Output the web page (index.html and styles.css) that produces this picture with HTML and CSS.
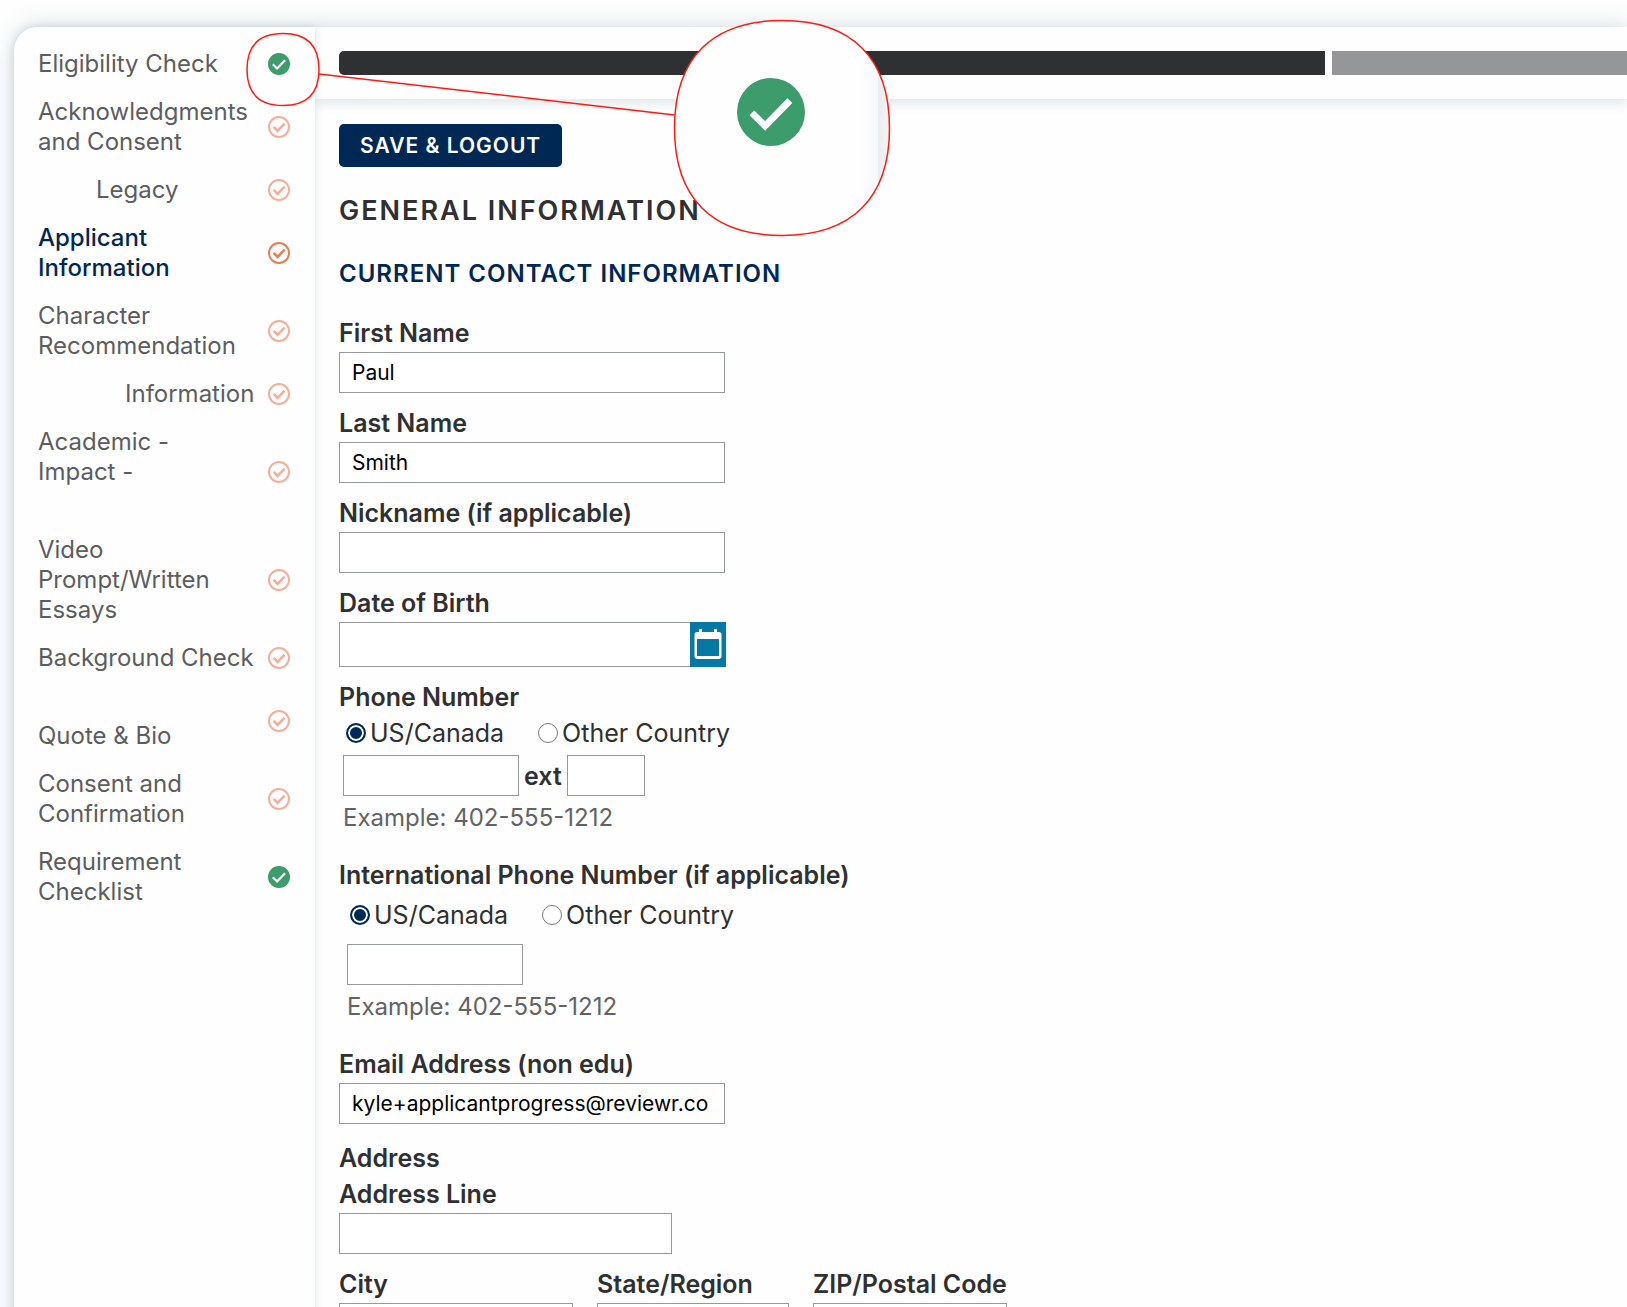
FILE: index.html
```html
<!DOCTYPE html>
<html lang="en">
  <head>
    <title>Applicant Information</title>
    <meta charset="UTF-8" />
    <meta name="viewport" content="width=device-width, initial-scale=1" />
    <link rel="stylesheet" href="styles.css">
  </head>
  <body>
    <!-- shared status icons -->
    <svg class="sprite" aria-hidden="true">
      <symbol id="done" viewBox="0 0 22 22">
        <circle cx="11" cy="11" r="11" fill="#3c9c6b" />
        <path d="M4.800 11.300l4.300 4.200 8-8.200" fill="none" stroke="#fff" stroke-width="2.200" />
      </symbol>
      <symbol id="todo" viewBox="0 0 22 22">
        <circle cx="11" cy="11" r="10" fill="none" stroke="currentColor" stroke-width="2" />
        <path d="M5.600 10.800l4 4 7-7.200" fill="none" stroke="currentColor" stroke-width="2.600" />
      </symbol>
    </svg>

    <div class="card">
      <nav class="sidebar">
        <ul>
          <li><a href="#">Eligibility Check</a><svg class="icon"><use href="#done" /></svg></li>
          <li><a href="#">Acknowledgments<br>and Consent</a><svg class="icon"><use href="#todo" /></svg></li>
          <li class="indent"><a href="#">Legacy</a><svg class="icon"><use href="#todo" /></svg></li>
          <li class="active"><a href="#">Applicant<br>Information</a><svg class="icon"><use href="#todo" /></svg></li>
          <li><a href="#">Character<br>Recommendation</a><svg class="icon"><use href="#todo" /></svg></li>
          <li class="indent-more"><a href="#">Information</a><svg class="icon"><use href="#todo" /></svg></li>
          <li><a href="#">Academic -<br>Impact -<br>&nbsp;</a><svg class="icon"><use href="#todo" /></svg></li>
          <li><a href="#">Video<br>Prompt/Written<br>Essays</a><svg class="icon"><use href="#todo" /></svg></li>
          <li><a href="#">Background Check</a><svg class="icon"><use href="#todo" /></svg></li>
          <li><a href="#">&nbsp;<br>Quote &amp; Bio</a><svg class="icon"><use href="#todo" /></svg></li>
          <li><a href="#">Consent and<br>Confirmation</a><svg class="icon"><use href="#todo" /></svg></li>
          <li><a href="#">Requirement<br>Checklist</a><svg class="icon"><use href="#done" /></svg></li>
        </ul>
      </nav>

      <div class="content">
        <header class="progress">
          <div class="bar bar-done"></div>
          <div class="bar bar-left"></div>
        </header>

        <main>
          <button class="button" type="button">SAVE &amp; LOGOUT</button>
          <h1>GENERAL INFORMATION</h1>
          <h2>CURRENT CONTACT INFORMATION</h2>

          <form>
            <div class="field">
              <label for="first">First Name</label>
              <input class="text" type="text" id="first" value="Paul">
            </div>
            <div class="field">
              <label for="last">Last Name</label>
              <input class="text" type="text" id="last" value="Smith">
            </div>
            <div class="field">
              <label for="nick">Nickname (if applicable)</label>
              <input class="text" type="text" id="nick">
            </div>
            <div class="field">
              <label for="dob">Date of Birth</label>
              <div class="date">
                <input class="text" type="text" id="dob">
                <button class="calendar" type="button" aria-label="Open calendar">
                  <svg viewBox="0 0 28 32" width="28" height="32">
                    <path fill="#fff" fill-rule="evenodd" d="M3 4h2V1h3v3h12V1h3v3h2a2.500 2.500 0 0 1 2.500 2.500V28a3 3 0 0 1-3 3h-21a3 3 0 0 1-3-3V6.500A2.500 2.500 0 0 1 3 4zM3 11v17h22V11z" />
                  </svg>
                </button>
              </div>
            </div>

            <fieldset class="phone">
              <legend>Phone Number</legend>
              <div class="radios">
                <label><input type="radio" name="phone" checked>US/Canada</label>
                <label><input type="radio" name="phone">Other Country</label>
              </div>
              <div class="numbers">
                <input class="text number" type="tel" aria-label="Phone number">
                <label for="ext">ext</label>
                <input class="text ext" type="text" id="ext">
              </div>
              <p class="hint">Example: 402-555-1212</p>
            </fieldset>

            <fieldset class="phone phone-intl">
              <legend>International Phone Number (if applicable)</legend>
              <div class="radios">
                <label><input type="radio" name="intl" checked>US/Canada</label>
                <label><input type="radio" name="intl">Other Country</label>
              </div>
              <div class="numbers">
                <input class="text number" type="tel" aria-label="International phone number">
              </div>
              <p class="hint">Example: 402-555-1212</p>
            </fieldset>

            <div class="field">
              <label for="email">Email Address (non edu)</label>
              <input class="text" type="text" id="email" value="kyle+applicantprogress@reviewr.co">
            </div>

            <fieldset class="address">
              <legend>Address</legend>
              <div class="field">
                <label for="line">Address Line</label>
                <input class="text line" type="text" id="line">
              </div>
              <div class="columns">
                <div class="field city">
                  <label for="city">City</label>
                  <input class="text" type="text" id="city">
                </div>
                <div class="field state">
                  <label for="state">State/Region</label>
                  <input class="text" type="text" id="state">
                </div>
                <div class="field zip">
                  <label for="zip">ZIP/Postal Code</label>
                  <input class="text" type="text" id="zip">
                </div>
              </div>
            </fieldset>
          </form>
        </main>
      </div>
    </div>

    <!-- magnified callout over the first status icon -->
    <svg class="callout" width="900" height="240" viewBox="0 0 900 240" aria-hidden="true">
      <defs>
        <linearGradient id="edge" gradientUnits="userSpaceOnUse" x1="860" y1="0" x2="890" y2="0">
          <stop offset="0" stop-color="#fefefe" />
          <stop offset="0.58" stop-color="#f6f8fa" />
          <stop offset="0.62" stop-color="#e9eef0" />
          <stop offset="1" stop-color="#f3f6f7" />
        </linearGradient>
      </defs>
      <g stroke="#ff1a12" stroke-width="1.500" fill="none">
        <path d="M283 33.500c24 0 36 12 36 36s-12 36-36 36-36-12-36-36 12-36 36-36z" />
        <path d="M319 74L674.500 115" />
        <path fill="url(#edge)" d="M782 20.500c70 0 107.500 37.500 107.500 107.500s-37.500 107.500-107.500 107.500S674.500 198 674.500 128 712 20.500 782 20.500z" />
      </g>
      <use href="#done" x="737" y="78" width="68" height="68" />
    </svg>
  </body>
</html>
```
FILE: styles.css
```css
* {
  box-sizing: border-box;
}
html {
  overflow: hidden;
}
body {
  margin: 0;
  padding: 27px 0 0 14px;
  background-color: #fefefe;
  color: #2f3032;
  font-family: Inter, sans-serif;
  font-size: 24px;
  line-height: 30px;
}
.sprite {
  display: none;
}
.card {
  display: flex;
  min-height: calc(100vh - 27px);
  background-color: #fefefe;
  border-radius: 24px 0 0 0;
  box-shadow: 0 0 24px rgba(60, 100, 115, 0.22);
}

/* Sidebar */
.sidebar {
  position: relative;
  z-index: 1;
  flex: 0 0 301px;
  padding: 22px 25px 24px 24px;
  background-color: #fefefe;
  border-radius: 24px 0 0 0;
  box-shadow: 0 0 8px rgba(60, 100, 130, 0.2);
}
.sidebar ul {
  display: flex;
  flex-direction: column;
  gap: 18px;
  margin: 0;
  padding: 0;
  list-style: none;
}
.sidebar li {
  display: flex;
  align-items: center;
  justify-content: space-between;
  color: #f2b09b;
}
.sidebar a {
  color: #5c5d5f;
  text-decoration: none;
  white-space: nowrap;
}
.sidebar .indent {
  padding-left: 58px;
}
.sidebar .indent-more {
  padding-left: 87px;
}
.sidebar .active {
  color: #e67f58;
}
.sidebar .active a {
  color: #002855;
  font-weight: 500;
}
.icon {
  flex: none;
  width: 22px;
  height: 22px;
}

/* Progress header */
.content {
  flex: 1;
  min-width: 0;
}
.progress {
  display: flex;
  gap: 7px;
  padding: 24px 0 24px 24px;
  box-shadow: 0 5px 10px rgba(60, 100, 115, 0.14);
}
.bar {
  height: 24px;
}
.bar-done {
  flex: 77;
  background-color: #2f3032;
  border-radius: 5px 0 0 5px;
}
.bar-left {
  flex: 23;
  background-color: #959698;
}

/* Form */
main {
  padding: 25px 24px 0;
}
.button {
  height: 43px;
  padding: 0 21px;
  border: 0;
  border-radius: 5px;
  background-color: #002855;
  color: #fff;
  font: 600 21px Inter, sans-serif;
  letter-spacing: 1px;
}
h1,
h2 {
  margin: 0;
  font-weight: 600;
}
h1 {
  margin-top: 27px;
  font-size: 27px;
  line-height: 34px;
  letter-spacing: 2px;
}
h2 {
  margin: 31px 0 29px;
  color: #002855;
  font-size: 24px;
  letter-spacing: 1px;
}
.field {
  display: flex;
  flex-direction: column;
  gap: 4px;
  margin-bottom: 15px;
}
.field label,
.numbers label,
legend {
  font-size: 25px;
  font-weight: 600;
}
.text {
  width: 386px;
  max-width: 100%;
  height: 41px;
  padding: 0 12px;
  border: 1px solid #96999b;
  border-radius: 0;
  background-color: #fff;
  color: #000;
  font: 21px Inter, sans-serif;
}
.date {
  display: flex;
}
.date .text {
  width: 351px;
  height: 45px;
  border-right: 0;
}
.calendar {
  display: flex;
  align-items: center;
  justify-content: center;
  width: 36px;
  height: 45px;
  padding: 0 0 2px;
  border: 0;
  background-color: #0678a6;
}
fieldset {
  margin: 0;
  padding: 0;
  border: 0;
}
legend {
  padding: 0;
}
.phone {
  margin-bottom: 27px;
  padding-left: 4px;
}
.phone legend {
  margin-left: -4px;
}
.radios {
  display: flex;
  gap: 34px;
  margin: 6px 0 7px 3px;
  font-size: 25px;
}
.radios label {
  display: flex;
  align-items: center;
  gap: 4px;
}
.radios input {
  appearance: none;
  width: 20px;
  height: 20px;
  margin: 0;
  border: 1px solid #77797b;
  border-radius: 50%;
  background-color: #fff;
}
.radios input:checked {
  border: 2px solid #002855;
  background-color: #002855;
  box-shadow: inset 0 0 0 2px #fff;
}
.numbers {
  display: flex;
  align-items: center;
  gap: 5px;
}
.number {
  width: 176px;
}
.ext {
  width: 78px;
}
.hint {
  margin: 7px 0 0;
  color: #626365;
}
.phone-intl {
  padding-left: 8px;
}
.phone-intl legend {
  margin-left: -8px;
}
.phone-intl .radios {
  margin: 10px 0 14px 3px;
}
.address {
  padding-top: 4px;
}
.address legend {
  margin-bottom: 2px;
  padding-top: 4px;
}
.line {
  width: 333px;
}
.columns {
  display: flex;
  gap: 24px;
}
.columns .text {
  width: 100%;
}
.city {
  width: 234px;
}
.state {
  width: 192px;
}
.zip {
  width: 194px;
}

/* Callout */
.callout {
  position: absolute;
  top: 0;
  left: 0;
  z-index: 2;
  pointer-events: none;
}
```
